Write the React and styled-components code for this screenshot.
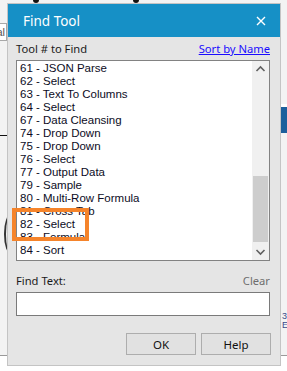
import React from "react";
import styled, { createGlobalStyle } from "styled-components";

const tools = [
  "61 - JSON Parse",
  "62 - Select",
  "63 - Text To Columns",
  "64 - Select",
  "67 - Data Cleansing",
  "74 - Drop Down",
  "75 - Drop Down",
  "76 - Select",
  "77 - Output Data",
  "79 - Sample",
  "80 - Multi-Row Formula",
  "81 - Cross Tab",
  "82 - Select",
  "83 - Formula",
  "84 - Sort",
];

const Global = createGlobalStyle`
  html, body { margin: 0; padding: 0; }
  body {
    width: 287px;
    height: 371px;
    overflow: hidden;
    background: #ffffff;
    font-family: "Noto Sans", "Liberation Sans", sans-serif;
  }
`;

const Desktop = styled.div`
  position: relative;
  width: 287px;
  height: 371px;
  background: linear-gradient(#f3f3f3 0 355px, #9a9a9a 355px 356px, #ffffff 356px);
  overflow: hidden;
`;

const Dot = styled.div`
  position: absolute;
  top: -3px;
  left: ${(p) => p.x}px;
  width: 6px;
  height: 6px;
  border-radius: 50%;
  background: #111;
`;

const NodeLabel = styled.div`
  position: absolute;
  left: -20px;
  top: 23px;
  width: 24px;
  height: 16px;
  border: 1px solid #a8a8a8;
  background: #fff;
  font-family: "Liberation Sans", sans-serif;
  font-size: 11px;
  line-height: 16px;
  text-align: right;
  color: #555;
  padding-right: 1px;
`;

const Wire = styled.div`
  position: absolute;
  left: 0;
  top: 135px;
  width: 10px;
  height: 1px;
  background: #111;
`;

const Curve = styled.div`
  position: absolute;
  left: 4px;
  top: 214px;
  width: 12px;
  height: 40px;
  border-left: 2px solid #333;
  border-radius: 50%;
`;

const SideTool = styled.div`
  position: absolute;
  left: 281px;
  top: 104px;
  width: 8px;
  height: 26px;
  background: #1c5f9c;
  border-top: 3px solid #fff;
`;

const SideText = styled.div`
  position: absolute;
  left: 282px;
  top: 312px;
  font-family: "Liberation Sans", sans-serif;
  font-size: 9px;
  line-height: 9px;
  color: #3a4a8a;
`;

const Dialog = styled.div`
  position: absolute;
  left: 7px;
  top: 3px;
  width: 272px;
  height: 361px;
  border: 1px solid #c4c4c4;
  background: #e5e5e5;
  display: flex;
  flex-direction: column;
`;

const TitleBar = styled.div`
  height: 33px;
  background: #1690c6;
  color: #fff;
  display: flex;
  align-items: center;
  justify-content: space-between;
  padding: 0 14px 0 15px;
  font-size: 13.5px;
`;

const Close = styled.svg`
  width: 10px;
  height: 10px;
`;

const Body = styled.div`
  flex: 1;
  display: flex;
  flex-direction: column;
  padding: 0 10px 0 8px;
`;

const LabelRow = styled.div`
  height: 23px;
  display: flex;
  align-items: center;
  justify-content: space-between;
  font-size: 11.2px;
  color: #1a1a1a;
`;

const Link = styled.a`
  color: #1a0dff;
  text-decoration: underline;
  cursor: pointer;
`;

const Muted = styled.span`
  color: #6e6e6e;
`;

const ListBox = styled.div`
  position: relative;
  height: 199px;
  border: 1px solid #828282;
  background: #fff;
  display: flex;
`;

const Items = styled.div`
  flex: 1;
  padding: 1px 0 0 3px;
  font-family: "Liberation Sans", sans-serif;
  font-size: 11.5px;
  color: #0c0c24;
`;

const Item = styled.div`
  height: 13px;
  line-height: 13px;
  white-space: nowrap;
`;

const ScrollBar = styled.div`
  width: 17px;
  background: #f0f0f0;
  display: flex;
  flex-direction: column;
  align-items: center;
`;

const Arrow = styled.svg`
  width: 17px;
  height: 17px;
  flex: none;
`;

const Track = styled.div`
  flex: 1;
  width: 100%;
  display: flex;
  flex-direction: column;
  align-items: center;
  padding-top: 98px;
`;

const Thumb = styled.div`
  width: 15px;
  height: 66px;
  background: #cdcdcd;
`;

const Highlight = styled.div`
  position: absolute;
  left: -5px;
  top: 147px;
  width: 69px;
  height: 25px;
  border: 4px solid #f5842b;
`;

const Gap = styled.div`
  height: ${(p) => p.h}px;
  flex: none;
`;

const TextBox = styled.input`
  border: 1px solid #7a7a7a;
  background: #fff;
  padding: 0 4px;
  box-sizing: border-box;
  height: 24px;
  outline: none;
`;

const Buttons = styled.div`
  display: flex;
  justify-content: flex-end;
  gap: 5px;
  margin-right: -1px;
`;

const Button = styled.button`
  width: 70px;
  height: 22px;
  background: #e1e1e1;
  border: 1px solid #adadad;
  font-family: "Noto Sans", "Liberation Sans", sans-serif;
  font-size: 11.5px;
  color: #111;
  padding: 0;
`;

export default function App() {
  return (
    <>
      <Global />
      <Desktop>
        <Dot x={33} />
        <Dot x={133} />
        <NodeLabel>al</NodeLabel>
        <Wire />
        <Curve />
        <SideTool />
        <SideText>3<br />E</SideText>

        <Dialog>
          <TitleBar>
            <span>Find Tool</span>
            <Close viewBox="0 0 10 10">
              <path d="M1 1 L9 9 M9 1 L1 9" stroke="#fff" strokeWidth="1.4" />
            </Close>
          </TitleBar>
          <Body>
            <LabelRow>
              <span>Tool # to Find</span>
              <Link>Sort by Name</Link>
            </LabelRow>
            <ListBox>
              <Items>
                {tools.map((t) => (
                  <Item key={t}>{t}</Item>
                ))}
              </Items>
              <ScrollBar>
                <Arrow viewBox="0 0 17 17">
                  <path d="M4.5 10 L8.5 6 L12.5 10" fill="none" stroke="#606060" strokeWidth="1.6" />
                </Arrow>
                <Track>
                  <Thumb />
                </Track>
                <Arrow viewBox="0 0 17 17">
                  <path d="M4.5 7 L8.5 11 L12.5 7" fill="none" stroke="#606060" strokeWidth="1.6" />
                </Arrow>
              </ScrollBar>
              <Highlight />
            </ListBox>
            <Gap h={8} />
            <LabelRow>
              <span>Find Text:</span>
              <Muted>Clear</Muted>
            </LabelRow>
            <TextBox />
            <Gap h={17} />
            <Buttons>
              <Button>OK</Button>
              <Button>Help</Button>
            </Buttons>
          </Body>
        </Dialog>
      </Desktop>
    </>
  );
}
